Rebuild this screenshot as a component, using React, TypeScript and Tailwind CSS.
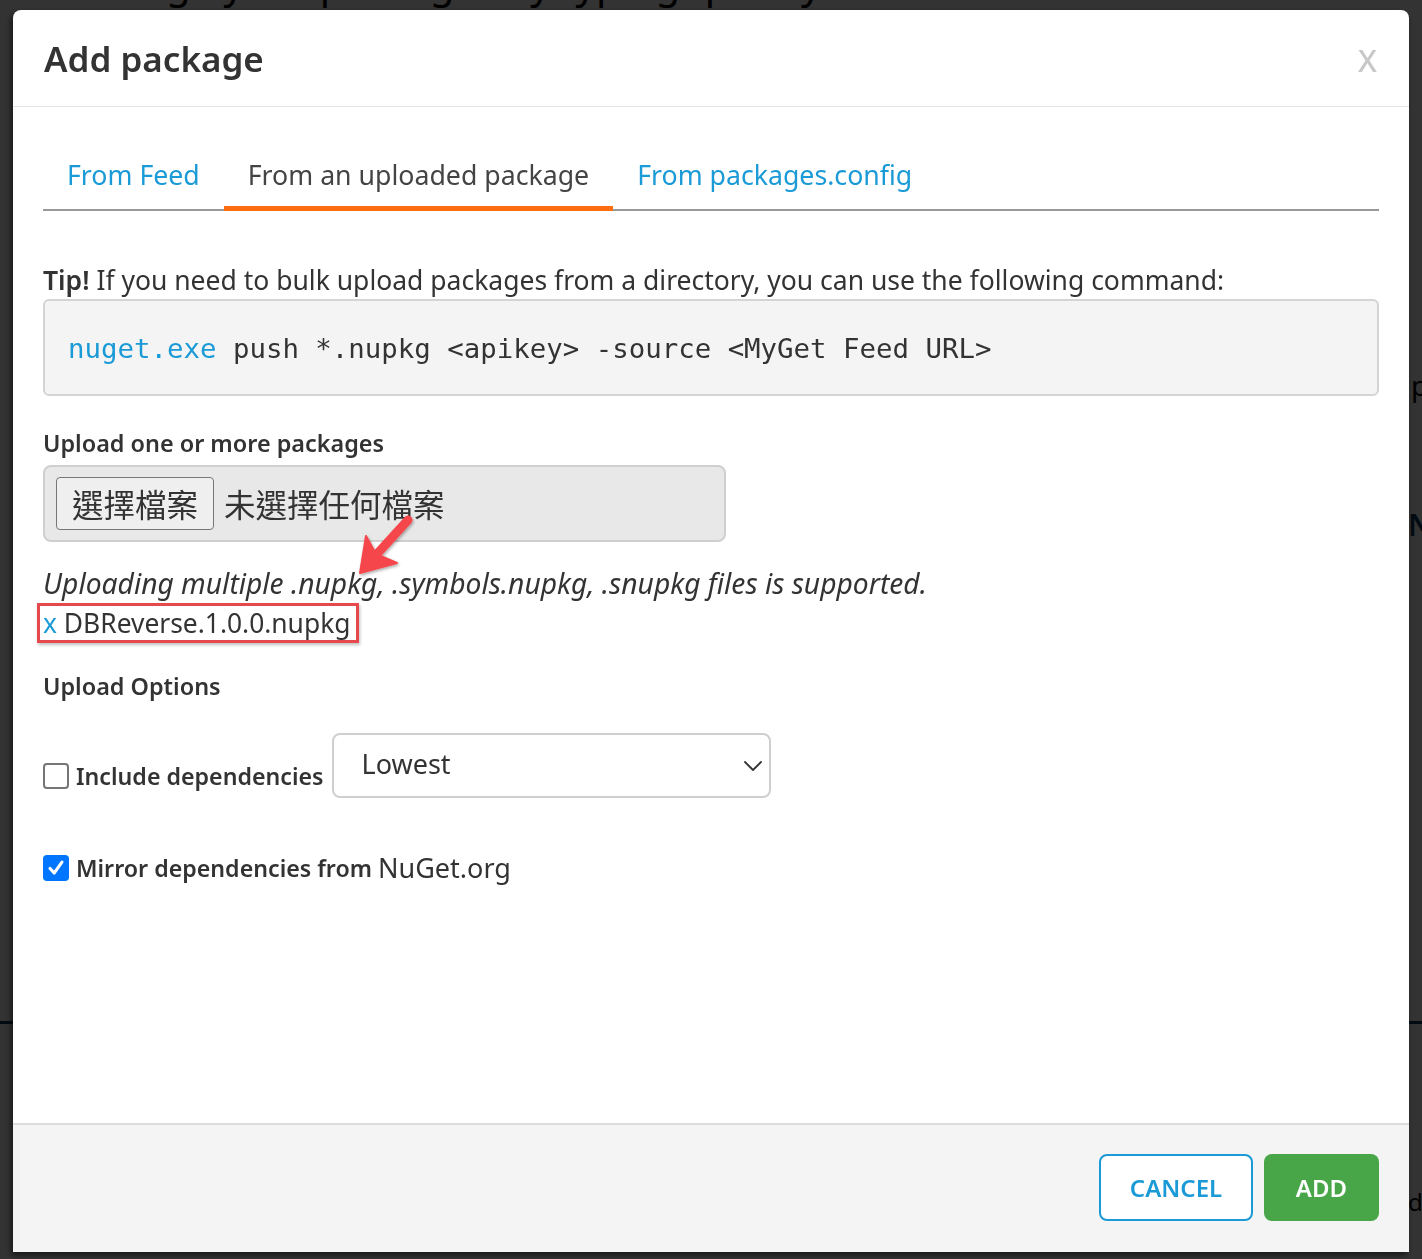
const sans = "font-['Noto_Sans','Open_Sans',sans-serif]";

function Checkbox({ checked }: { checked?: boolean }) {
  if (checked) {
    return (
      <span className="flex h-[26px] w-[26px] shrink-0 items-center justify-center rounded-[4px] bg-[#0075ff]">
        <svg viewBox="0 0 24 24" className="h-[22px] w-[22px]" fill="none" stroke="#fff" strokeWidth="3.4" strokeLinecap="round" strokeLinejoin="round">
          <path d="M5.5 12.5 10 17.5 18.5 5.5" />
        </svg>
      </span>
    );
  }
  return <span className="h-[26px] w-[26px] shrink-0 rounded-[4px] border-2 border-[#767676] bg-white" />;
}

function Tab({ label, active }: { label: string; active?: boolean }) {
  return (
    <div
      className={
        "-mb-[2px] px-6 pb-[13px] text-[26.7px] leading-[36px] border-b-[5px] " +
        (active ? "border-[#ff6d11] text-[#444]" : "border-transparent text-[#1a9ad6]")
      }
    >
      {label}
    </div>
  );
}

// red annotation arrow pointing at the selected file
function Arrow() {
  return (
    <svg className="pointer-events-none absolute left-[330px] top-[498px] h-[90px] w-[90px]" viewBox="0 0 90 90">
      <defs>
        <filter id="sh" x="-30%" y="-30%" width="160%" height="160%">
          <feDropShadow dx="1" dy="1.5" stdDeviation="1.5" floodColor="#000" floodOpacity="0.35" />
        </filter>
      </defs>
      <g filter="url(#sh)" fill="#f5474c" stroke="#f5474c" strokeLinejoin="round">
        <path d="M65 12 L34 46" strokeWidth="9" strokeLinecap="round" fill="none" />
        <polygon points="17,65 23,28 33,46 54,55" strokeWidth="2" />
      </g>
    </svg>
  );
}

export default function App() {
  return (
    <div className={`relative h-[1259px] w-[1422px] overflow-hidden bg-white ${sans}`}>
      {/* page underneath the overlay */}
      <div className="-mt-[37px] pl-[60px] text-[40px] leading-[40px] text-black whitespace-nowrap">
        Manage your packages by typing quickly
      </div>
      <div className="mt-[361px] whitespace-nowrap pl-[1411px] text-[28px] text-black">package</div>
      <div className="mt-[96px] whitespace-nowrap pl-[1408px] text-[30px] font-semibold text-[#0b3a5b]">NuGet</div>
      <div className="mt-[474px] h-[3px] w-full bg-[#0b3a5b]" />
      <div className="mt-[160px] whitespace-nowrap pl-[1408px] text-[24px] text-black">downloads</div>

      {/* overlay */}
      <div className="fixed inset-0 bg-black/80 pt-[10px]">
        <div className="relative mx-auto flex h-[1242px] w-[1396px] flex-col overflow-hidden rounded-t-[8px] bg-white shadow-[-2px_3px_6px_rgba(0,0,0,0.6)]">
          {/* header */}
          <div className="flex h-[97px] items-center justify-between border-b border-[#e5e5e5] pl-[31px] pr-[32px]">
            <h1 className="text-[35px] font-semibold leading-none text-[#333]">Add package</h1>
            <span className="mt-[4px] text-[31px] font-medium leading-none text-[#c8c8c8]">X</span>
          </div>

          {/* body */}
          <div className="flex-1 px-[30px]">
            <div className="mt-[50px] flex border-b-2 border-[#999]">
              <Tab label="From Feed" />
              <Tab label="From an uploaded package" active />
              <Tab label="From packages.config" />
            </div>

            <p className="mt-[52px] text-[26.5px] leading-[34px] text-[#333]">
              <span className="font-semibold">Tip!</span> If you need to bulk upload packages from a directory, you can use the following command:
            </p>
            <div className="mt-[2px] flex h-[97px] items-center rounded-[6px] border-2 border-[#d4d4d4] bg-[#f4f4f4] px-[23px] pt-[3px] font-['DejaVu_Sans_Mono',monospace] text-[27.4px] text-[#333]">
              <span className="text-[#1a9ad6]">nuget.exe</span>&nbsp;push *.nupkg &lt;apikey&gt; -source &lt;MyGet Feed URL&gt;
            </div>

            <div className="mt-[32px] text-[23.4px] font-semibold leading-[30px] text-[#333]">Upload one or more packages</div>
            <div className="mt-[7px] flex h-[77px] w-[683px] items-center gap-[10px] rounded-[8px] border-2 border-[#cfcfcf] bg-[#e8e8e8] px-[11px] font-['Noto_Sans_CJK_TC','Noto_Sans',sans-serif] text-[31.5px] text-[#333]">
              <span className="flex h-[53px] items-center rounded-[4px] border-[1.5px] border-[#767676] bg-[#efefef] px-[15px] leading-none">選擇檔案</span>
              <span className="leading-none">未選擇任何檔案</span>
            </div>

            <p className="mt-[24px] text-[28.2px] italic leading-[34px] text-[#333]">
              Uploading multiple .nupkg, .symbols.nupkg, .snupkg files is supported.
            </p>
            <div className="mt-[3px]">
              <span className="-ml-[6px] inline-block border-[3px] border-[#e5484d] pl-[3px] pr-[6px] text-[26.4px] leading-[34px] text-[#333] shadow-[1px_2px_3px_rgba(0,0,0,0.25)]">
                <span className="text-[#1a9ad6]">x</span> DBReverse.1.0.0.nupkg
              </span>
            </div>

            <div className="mt-[28px] text-[23.4px] font-semibold leading-[30px] text-[#333]">Upload Options</div>

            <div className="mt-[32px] flex items-start gap-[8px]">
              <label className="mt-[30px] flex items-center gap-[7px] text-[23.2px] font-semibold leading-[26px] text-[#333]">
                <Checkbox />
                Include dependencies
              </label>
              <div className="flex h-[65px] w-[439px] items-center justify-between rounded-[8px] border-2 border-[#cfcfcf] bg-white pl-[28px] pr-[7px]">
                <span className="-mt-[2px] text-[27px] text-[#333]">Lowest</span>
                <svg viewBox="0 0 18 10" className="h-[10px] w-[18px]" fill="none" stroke="#333" strokeWidth="1.8" strokeLinecap="round" strokeLinejoin="round">
                  <path d="M1 1 9 9 17 1" />
                </svg>
              </div>
            </div>

            <label className="mt-[55px] flex items-center gap-[7px] text-[23.2px] leading-[30px] text-[#333]">
              <Checkbox checked />
              <span className="font-semibold">Mirror dependencies from</span>
              <span className="-ml-[1px] text-[27px]">NuGet.org</span>
            </label>
          </div>

          {/* footer */}
          <div className="flex h-[129px] items-start justify-end gap-[11px] border-t-2 border-[#dcdcdc] bg-[#f4f4f4] px-[30px] pt-[29px]">
            <button className="h-[67px] w-[154px] rounded-[8px] border-2 border-[#1a9ad6] bg-white text-[24px] font-semibold text-[#1a9ad6]">
              CANCEL
            </button>
            <button className="h-[67px] w-[115px] rounded-[8px] bg-[#48a648] text-[24px] font-semibold text-white">ADD</button>
          </div>

          <Arrow />
        </div>
      </div>
    </div>
  );
}
